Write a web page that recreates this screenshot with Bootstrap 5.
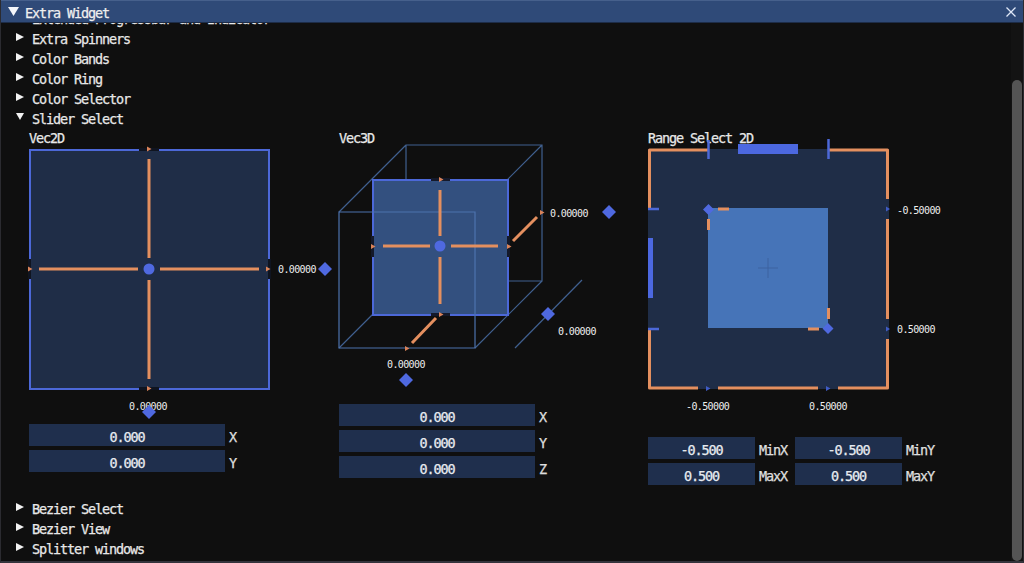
<!DOCTYPE html>
<html lang="en">
<head>
<meta charset="UTF-8">
<title>Extra Widget</title>
<link href="https://cdn.jsdelivr.net/npm/bootstrap@5.3.3/dist/css/bootstrap.min.css" rel="stylesheet">
<script src="https://cdn.jsdelivr.net/npm/bootstrap@5.3.3/dist/js/bootstrap.bundle.min.js"></script>
<style>
html, body { height: 563px; overflow: hidden; background: #0f0f0f; }
body { font-family: "DejaVu Sans Mono", "Liberation Mono", monospace; font-size: 13.5px; letter-spacing: -1.13px; color: #e8e8e8; line-height: 22px; -webkit-text-stroke: .25px #e8e8e8; }
.win-frame { height: 563px; border-left: 1px solid #2b2b30; border-bottom: 2px solid #34343c; border-right: 1px solid #2b2b30; }
.win-title { height: 23px; background: #2f4a78; border-top: 1px solid #46608c; border-bottom: 1px solid #1d2c47; padding-left: 7px; color: #f2f2f2; }
.win-title .title-text { margin-left: 6px; padding-top: 2px; }
.win-close { margin-right: 7px; }
.win-body { height: 538px; overflow: hidden; }
.win-scroll { width: 12px; background: #131313; }
.scroll-thumb { width: 10px; height: 481px; margin-top: 57px; margin-left: 1px; border-radius: 5px; background: #545454; }
.tree-first { margin-top: -15px; }
.tree-row { height: 20px; padding-left: 15px; }
.tree-row svg { margin-right: 8px; margin-top: 5px; }
.pane-row { height: 370px; padding-left: 28px; }
.pane-vec2 { width: 310px; }
.pane-vec3 { width: 309px; }
.pane-head { height: 21px; line-height: 21px; }
.pane-row svg { display: block; overflow: visible; }
.num-field { height: 22px; background: #1f2f4d; color: #e6ecf5; text-align: center; line-height: 26px; }
.field-wide { width: 196px; }
.field-half { width: 107px; }
.field-label { height: 22px; margin-left: 4px; line-height: 26px; color: #dcdcdc; }
.range-pair { width: 147px; }
.val-text { font-size: 10px; letter-spacing: -.62px; fill: #eee; -webkit-text-stroke: .15px #eee; }
.wire { stroke: #40608f; fill: none; stroke-width: 1.2; }
.wire-front { stroke: #4d73ae; fill: none; stroke-width: 1.2; }
.or { stroke: #e48f5f; stroke-width: 3; fill: none; }
.bl { stroke: #4c68d8; stroke-width: 2.5; fill: none; }
.tip-o { fill: #d9835a; }
.tip-b { fill: #3f5bc4; }
.dot-b { fill: #4f69e0; }
</style>
</head>
<body>
<div class="win-frame d-flex flex-column">
    <div class="win-title d-flex align-items-center">
        <svg width="11" height="9" viewBox="0 0 11 9"><path d="M0 0H11L5.500 9Z" fill="#f4f6fa"/></svg>
        <span class="title-text flex-grow-1">Extra Widget</span>
        <svg class="win-close" width="10" height="10" viewBox="0 0 10 10"><path d="M.5.500 9.500 9.500M9.500.500.500 9.500" stroke="#dfe8f8" stroke-width="1.300"/></svg>
    </div>
    <div class="d-flex flex-grow-1">
        <div class="win-body flex-grow-1">
            <div class="tree-row tree-first d-flex"><svg width="8" height="8" viewBox="0 0 8 8"><path d="M0 0 8 4 0 8Z" fill="#f2f2f2"/></svg><span>Extended Progressbar and Indicator</span></div>
            <div class="tree-row d-flex"><svg width="8" height="8" viewBox="0 0 8 8"><path d="M0 0 8 4 0 8Z" fill="#f2f2f2"/></svg><span>Extra Spinners</span></div>
            <div class="tree-row d-flex"><svg width="8" height="8" viewBox="0 0 8 8"><path d="M0 0 8 4 0 8Z" fill="#f2f2f2"/></svg><span>Color Bands</span></div>
            <div class="tree-row d-flex"><svg width="8" height="8" viewBox="0 0 8 8"><path d="M0 0 8 4 0 8Z" fill="#f2f2f2"/></svg><span>Color Ring</span></div>
            <div class="tree-row d-flex"><svg width="8" height="8" viewBox="0 0 8 8"><path d="M0 0 8 4 0 8Z" fill="#f2f2f2"/></svg><span>Color Selector</span></div>
            <div class="tree-row d-flex"><svg width="8" height="8" viewBox="0 0 8 8"><path d="M0 0H8L4 7Z" fill="#f2f2f2"/></svg><span>Slider Select</span></div>

            <div class="pane-row d-flex">
                <div class="pane-vec2">
                    <div class="pane-head">Vec2D</div>
                    <svg width="310" height="275" viewBox="29 149 310 275">
                        <rect x="30" y="150" width="239" height="239" fill="#1f2d47" stroke="#4c68d8" stroke-width="2"/>
                        <path d="M139 149.500H159M139 388.500H159M29.500 259V279M269.500 259V279" stroke="#0f1420" stroke-width="3"/>
                        <path class="or" d="M149 159V258M149 280V379M39 269H138M160 269H259"/>
                        <circle class="dot-b" cx="149" cy="269" r="5.500"/>
                        <path class="tip-o" d="M147 146.500 151.500 149 147 151.500ZM147 386 151.500 388.500 147 391ZM28 266.500 32.500 269 28 271.500ZM266 266.500 270.500 269 266 271.500Z"/>
                        <text class="val-text" x="278" y="273">0.00000</text>
                        <path class="dot-b" d="M325 262 332 269 325 276 318 269Z"/>
                        <text class="val-text" x="129" y="410">0.00000</text>
                        <path class="dot-b" d="M149 405 156 412 149 419 142 412Z"/>
                    </svg>
                    <div class="d-flex mb-1"><div class="num-field field-wide">0.000</div><span class="field-label">X</span></div>
                    <div class="d-flex"><div class="num-field field-wide">0.000</div><span class="field-label">Y</span></div>
                </div>

                <div class="pane-vec3">
                    <div class="pane-head">Vec3D</div>
                    <svg width="309" height="255" viewBox="339 149 309 255">
                        <path class="wire" d="M406 145H542V281H406ZM339 212 406 145M475 212 542 145M339 348 406 281M475 348 542 281"/>
                        <rect x="373" y="180" width="135" height="135" fill="#33507f" stroke="#4c68d8" stroke-width="2"/>
                        <path d="M431 179.500H450M431 314.500H450M372.500 236V257M508.500 236V257" stroke="#14192a" stroke-width="3"/>
                        <path class="wire-front" d="M339 212H475V348H339Z"/>
                        <path class="or" d="M440 190V236M440 257V304M383 246H430M451 246H498M513 241 537 217M412 343 436 318"/>
                        <circle class="dot-b" cx="440" cy="246" r="5.500"/>
                        <path class="tip-o" d="M439 177 443.500 179.500 439 182ZM439 312 443.500 314.500 439 317ZM371 244 375.500 246.500 371 249ZM507 244 511.500 246.500 507 249ZM540 210 544.500 212.500 540 215ZM405 346 409.500 348.500 405 351Z"/>
                        <text class="val-text" x="550" y="217">0.00000</text>
                        <path class="dot-b" d="M609 205 616 212 609 219 602 212Z"/>
                        <path class="wire" d="M515 348 582 280"/>
                        <path class="dot-b" d="M548 307 555 314 548 321 541 314Z"/>
                        <text class="val-text" x="558" y="335">0.00000</text>
                        <text class="val-text" x="387" y="368">0.00000</text>
                        <path class="dot-b" d="M406 373 413 380 406 387 399 380Z"/>
                    </svg>
                    <div class="d-flex mb-1"><div class="num-field field-wide">0.000</div><span class="field-label">X</span></div>
                    <div class="d-flex mb-1"><div class="num-field field-wide">0.000</div><span class="field-label">Y</span></div>
                    <div class="d-flex"><div class="num-field field-wide">0.000</div><span class="field-label">Z</span></div>
                </div>

                <div>
                    <div class="pane-head">Range Select 2D</div>
                    <svg width="300" height="288" viewBox="648 149 300 288">
                        <rect x="648" y="149" width="241" height="240" fill="#1f2d47"/>
                        <rect x="708" y="208" width="120" height="120" fill="#4674b8"/>
                        <path d="M768 258V278M758 268H778" stroke="#3d62a0" stroke-width="1"/>
                        <path class="or" stroke-linejoin="round" d="M649.500 208V150H708M828 150H887.500V199M887.500 219V319M887.500 339V388H838M818 388H718M698 388H649.500V330"/>
                        <path class="or" d="M718 209H729M708.500 219V230M808 329H819M828.500 308V319"/>
                        <path d="M738 144H798V154H738ZM648 238H653V298H648Z" fill="#4c68e0"/>
                        <path class="bl" d="M708.500 140V159M828.500 139V159M648 209H659M648 329H659"/>
                        <path class="dot-b" d="M708.500 204 714 209.500 708.500 215 703 209.500ZM828 323 833.500 328.500 828 334 822.500 328.500Z"/>
                        <path class="tip-b" d="M886 206.500 890 209 886 211.500ZM886 326.500 890 329 886 331.500ZM706 386 710.500 388.500 706 391ZM826 386 830.500 388.500 826 391Z"/>
                        <text class="val-text" x="897" y="214">-0.50000</text>
                        <text class="val-text" x="897" y="333">0.50000</text>
                        <text class="val-text" x="686" y="410">-0.50000</text>
                        <text class="val-text" x="809" y="410">0.50000</text>
                    </svg>
                    <div class="d-flex mb-1">
                        <div class="range-pair d-flex"><div class="num-field field-half">-0.500</div><span class="field-label">MinX</span></div>
                        <div class="d-flex"><div class="num-field field-half">-0.500</div><span class="field-label">MinY</span></div>
                    </div>
                    <div class="d-flex">
                        <div class="range-pair d-flex"><div class="num-field field-half">0.500</div><span class="field-label">MaxX</span></div>
                        <div class="d-flex"><div class="num-field field-half">0.500</div><span class="field-label">MaxY</span></div>
                    </div>
                </div>
            </div>

            <div class="tree-row d-flex"><svg width="8" height="8" viewBox="0 0 8 8"><path d="M0 0 8 4 0 8Z" fill="#f2f2f2"/></svg><span>Bezier Select</span></div>
            <div class="tree-row d-flex"><svg width="8" height="8" viewBox="0 0 8 8"><path d="M0 0 8 4 0 8Z" fill="#f2f2f2"/></svg><span>Bezier View</span></div>
            <div class="tree-row d-flex"><svg width="8" height="8" viewBox="0 0 8 8"><path d="M0 0 8 4 0 8Z" fill="#f2f2f2"/></svg><span>Splitter windows</span></div>
        </div>
        <div class="win-scroll"><div class="scroll-thumb"></div></div>
    </div>
</div>
</body>
</html>
